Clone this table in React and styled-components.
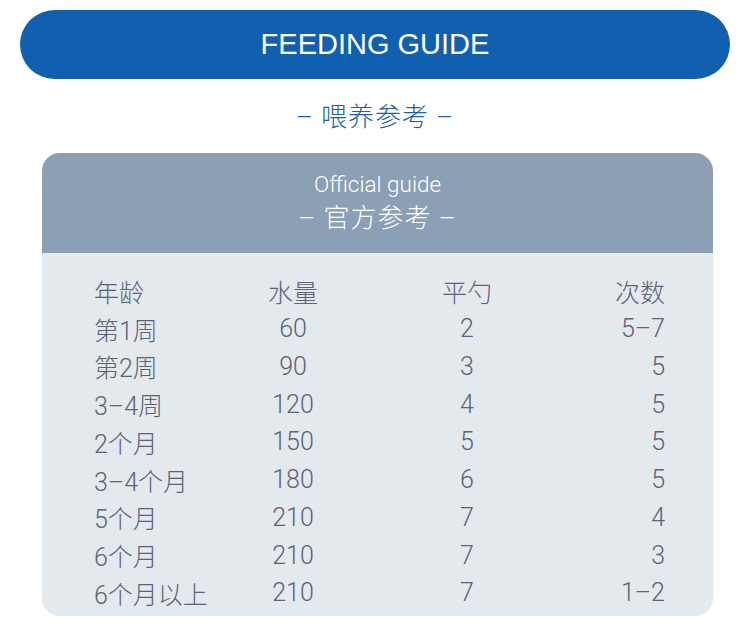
import React from "react";
import styled, { createGlobalStyle } from "styled-components";

const GlobalStyle = createGlobalStyle`
    body {
        margin: 0;
        background: #ffffff;
        font-family: Roboto, "Noto Sans CJK SC", sans-serif;
    }
`;

const Page = styled.div`
    width: 750px;
    padding-top: 10px;
    display: flex;
    flex-direction: column;
    align-items: center;
`;

const TitleBar = styled.div`
    width: 710px;
    height: 69px;
    border-radius: 35px;
    background-color: #1160b0;
    display: flex;
    justify-content: center;
    align-items: center;
    color: #ffffff;
    font-family: "Liberation Sans", Arial, sans-serif;
    font-size: 29px;
    padding-bottom: 1px;
    box-sizing: border-box;
`;

const SubTitle = styled.div`
    margin-top: 21px;
    line-height: 34px;
    font-size: 26px;
    font-weight: 300;
    color: #1d5fae;
    letter-spacing: 1px;
`;

const Card = styled.div`
    margin-top: 19px;
    width: 671px;
    margin-left: 5px;
    border-radius: 18px;
    overflow: hidden;
    background-color: #e4e9ee;
`;

const CardHeader = styled.div`
    height: 100px;
    box-sizing: border-box;
    padding-top: 17px;
    background-color: #8b9fb5;
    color: #ffffff;
    text-align: center;
`;

const HeaderEn = styled.div`
    font-size: 22.5px;
    font-weight: 300;
    line-height: 28px;
`;

const HeaderCn = styled.div`
    margin-top: 3px;
    font-size: 26px;
    font-weight: 300;
    line-height: 34px;
    letter-spacing: 1px;
`;

const Table = styled.div`
    display: grid;
    grid-template-columns: 124px 150px 198px 99px;
    grid-auto-rows: 37.75px;
    padding: 19px 48px 4px 52px;
    color: #5b6476;
    font-size: 25px;
    font-weight: 300;
`;

const Cell = styled.div`
    display: flex;
    align-items: center;
    white-space: nowrap;
    justify-content: ${props =>
        props.align === "right" ? "flex-end" : props.align === "center" ? "center" : "flex-start"};
`;

const aligns = ["left", "center", "center", "right"];

const rows = [
    ["年龄", "水量", "平勺", "次数"],
    ["第1周", "60", "2", "5–7"],
    ["第2周", "90", "3", "5"],
    ["3–4周", "120", "4", "5"],
    ["2个月", "150", "5", "5"],
    ["3–4个月", "180", "6", "5"],
    ["5个月", "210", "7", "4"],
    ["6个月", "210", "7", "3"],
    ["6个月以上", "210", "7", "1–2"],
];

export default function App() {
    return (
        <>
            <GlobalStyle />
            <Page>
                <TitleBar>FEEDING GUIDE</TitleBar>
                <SubTitle>– 喂养参考 –</SubTitle>
                <Card>
                    <CardHeader>
                        <HeaderEn>Official guide</HeaderEn>
                        <HeaderCn>– 官方参考 –</HeaderCn>
                    </CardHeader>
                    <Table>
                        {rows.map((row, r) =>
                            row.map((text, c) => (
                                <Cell key={r + "-" + c} align={aligns[c]}>{text}</Cell>
                            ))
                        )}
                    </Table>
                </Card>
            </Page>
        </>
    );
}
